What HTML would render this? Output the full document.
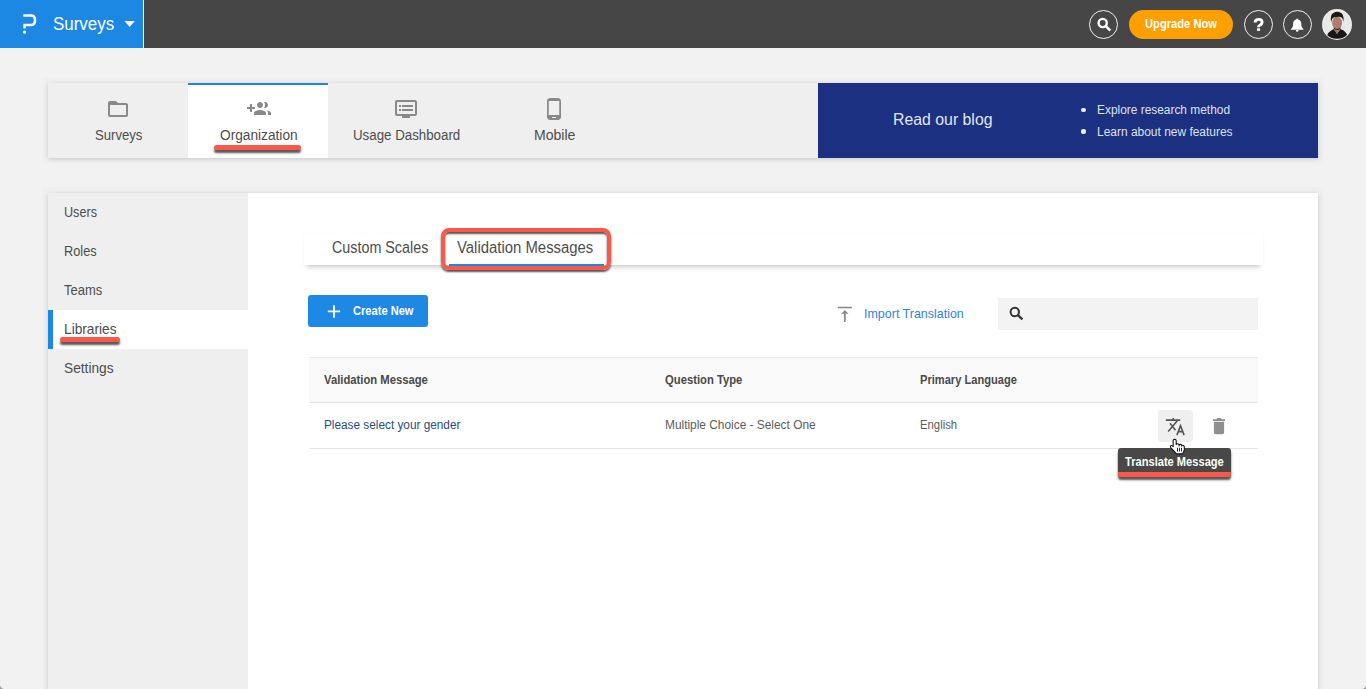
<!DOCTYPE html>
<html><head><meta charset="utf-8"><style>
html,body{margin:0;padding:0;}
body{width:1366px;height:689px;overflow:hidden;background:#f2f2f2;position:relative;font-family:"Liberation Sans",sans-serif;}
.abs{position:absolute;box-sizing:content-box;}
.t{position:absolute;line-height:1;white-space:nowrap;}
svg.abs{overflow:visible;}
</style></head><body>
<div class="abs" style="left:0px;top:0px;width:1366px;height:48px;background:#464646"></div>
<div class="abs" style="left:0px;top:0px;width:143px;height:48px;background:#1d87e4"></div>
<div class="abs" style="left:143px;top:0px;width:1px;height:48px;background:#f4f4f4"></div>
<svg class="abs" style="left:18px;top:10px" width="22" height="26" viewBox="18 10 22 26"><path d="M24.6 28.6 V25 H31 Q35 25 35 20.2 Q35 15.5 31 15.5 H23.3" fill="none" stroke="#fff" stroke-width="2.5"/><circle cx="24.6" cy="32.1" r="1.6" fill="#fff"/></svg>
<div class="t" style="left:53.00px;top:15.36px;font-size:18px;color:#fff;transform:scaleX(0.9412);transform-origin:0 0;">Surveys</div>
<svg class="abs" style="left:124px;top:21px" width="11" height="6" viewBox="124 21 11 6"><path d="M124.5 21 H134.8 L129.65 26.9Z" fill="#fff"/></svg>
<div class="abs" style="left:1088.85px;top:9.65px;width:27.30px;height:27.30px;border:1px solid #f0f0f0;border-radius:50%"></div>
<svg class="abs" style="left:1092px;top:12px" width="24" height="24" viewBox="1092 12 24 24"><circle cx="1102.7" cy="23" r="4.1" fill="none" stroke="#fff" stroke-width="2.4"/><path d="M1105.6 25.9 L1110.3 30.6" stroke="#fff" stroke-width="2.6"/></svg>
<div class="abs" style="left:1129px;top:10px;width:104px;height:29px;border-radius:15px;background:#ff9f00"></div>
<div class="t" style="left:1145.00px;top:17.10px;font-size:13px;color:#fff;transform:scaleX(0.8590);transform-origin:0 0;font-weight:700;">Upgrade Now</div>
<div class="abs" style="left:1243.85px;top:9.75px;width:27.30px;height:27.30px;border:1px solid #f0f0f0;border-radius:50%"></div>
<svg class="abs" style="left:1250px;top:14px" width="18" height="20" viewBox="1250 14 18 20"><path d="M1255.1 22.6 Q1255.1 19.4 1258.6 19.4 Q1262.1 19.4 1262.1 22.3 Q1262.1 24.1 1260.1 25 Q1258.5 25.7 1258.5 27.3" fill="none" stroke="#fff" stroke-width="2.9"/><rect x="1256.95" y="28.3" width="3.1" height="2.6" fill="#fff"/></svg>
<div class="abs" style="left:1282.85px;top:9.75px;width:27.30px;height:27.30px;border:1px solid #f0f0f0;border-radius:50%"></div>
<svg class="abs" style="left:1288px;top:16px" width="18" height="18" viewBox="1288 16 18 18"><path d="M1297.2 18.6 Q1298 18.6 1298.1 19.5 Q1301.3 20.3 1301.3 24 L1301.5 26.2 Q1302 27.8 1303.4 28.9 V29.7 H1291 V28.9 Q1292.4 27.8 1292.9 26.2 L1293.1 24 Q1293.1 20.3 1296.3 19.5 Q1296.4 18.6 1297.2 18.6Z" fill="#fff"/><path d="M1295.8 30.1 H1298.6 Q1298.5 31.9 1297.2 31.9 Q1295.9 31.9 1295.8 30.1Z" fill="#fff"/></svg>
<div class="abs" style="left:1322.5px;top:10.4px;width:28.2px;height:28.2px;border-radius:50%;overflow:hidden;background:#e8e8e8;box-shadow:0 0 0 0.9px #f2f2f2">
<svg width="28.2" height="28.2" viewBox="0.5 0.5 28.2 28.2" style="display:block"><path d="M3.6 29.3 Q5 21.8 11.6 19.6 L14.4 24 L17.6 19.6 Q24.5 21.5 26.2 29.3Z" fill="#171717"/><path d="M11.9 17 H17.4 L17.2 21 L14.5 24.5 L12.1 21Z" fill="#a0766a"/><ellipse cx="14.6" cy="13.4" rx="5" ry="6.1" fill="#a97f6e"/><path d="M11 17.8 Q14.6 21.2 18.2 17.8 L17.8 19.6 Q14.6 21.6 11.4 19.6Z" fill="#3b2b25"/><path d="M8.6 13 Q7.4 5 11 3.6 Q13.5 1.8 16.5 2.6 Q21.8 3.4 21 12.2 Q20.2 9.4 19.5 8.2 Q16.8 6.8 14.2 7.6 Q10.5 7.4 9.6 9.5 Q8.9 11 8.6 13Z" fill="#1b1816"/></svg></div>
<div class="abs" style="left:48px;top:83px;width:1270px;height:75px;background:#efefef;box-shadow:0 0 1.5px 6px rgba(0,0,0,0.013), 0 1px 4px rgba(0,0,0,0.17)"></div>
<div class="abs" style="left:188px;top:83px;width:140px;height:75px;background:#fff"></div>
<div class="abs" style="left:188px;top:83px;width:140px;height:2px;background:#1d87e4"></div>
<div class="abs" style="left:818px;top:83px;width:500px;height:75px;background:#1b3080"></div>
<svg class="abs" style="left:106.0px;top:97px" width="24" height="24" viewBox="0 0 24 24"><path d="M20 6h-8l-2-2H4c-1.1 0-1.99.9-1.99 2L2 18c0 1.1.9 2 2 2h16c1.1 0 2-.9 2-2V8c0-1.1-.9-2-2-2zm0 12H4V8h16v10z" fill="#898989"/></svg>
<div class="t" style="left:94.80px;top:128.15px;font-size:14px;color:#4d4d4d;transform:scaleX(0.9372);transform-origin:0 0;">Surveys</div>
<svg class="abs" style="left:246.8px;top:97px" width="24" height="24" viewBox="0 0 24 24"><path d="M8 10H5V7H3v3H0v2h3v3h2v-3h3v-2zm10 1c1.66 0 2.99-1.34 2.99-3S19.66 5 18 5c-.32 0-.63.05-.91.14.57.81.9 1.79.9 2.86s-.34 2.04-.9 2.86c.28.09.59.14.91.14zm-5 0c1.66 0 2.99-1.34 2.99-3S14.66 5 13 5c-1.66 0-3 1.34-3 3s1.34 3 3 3zm6.62 2.16c.83.73 1.38 1.66 1.38 2.84v2h3v-2c0-1.54-2.37-2.49-4.38-2.84zM13 13c-2 0-6 1-6 3v2h12v-2c0-2-4-3-6-3z" fill="#898989"/></svg>
<div class="t" style="left:219.80px;top:128.15px;font-size:14px;color:#4d4d4d;transform:scaleX(0.9776);transform-origin:0 0;">Organization</div>
<svg class="abs" style="left:394.1px;top:97px" width="24" height="24" viewBox="0 0 24 24"><path d="M21 3H3c-1.1 0-2 .9-2 2v12c0 1.1.9 2 2 2h5v2h8v-2h5c1.1 0 1.99-.9 1.99-2L23 5c0-1.1-.9-2-2-2zm0 14H3V5h18v12zm-2-9H8v2h11V8zm0 4H8v2h11v-2zM7 8H5v2h2V8zm0 4H5v2h2v-2z" fill="#898989"/></svg>
<div class="t" style="left:352.80px;top:128.15px;font-size:14px;color:#4d4d4d;transform:scaleX(0.9500);transform-origin:0 0;">Usage Dashboard</div>
<svg class="abs" style="left:542.1px;top:97px" width="24" height="24" viewBox="0 0 24 24"><path d="M16 1H8C6.34 1 5 2.34 5 4v16c0 1.66 1.34 3 3 3h8c1.66 0 3-1.34 3-3V4c0-1.66-1.34-3-3-3zm-2 20h-4v-1h4v1zm3.25-3H6.75V4h10.5v14z" fill="#898989"/></svg>
<div class="t" style="left:533.90px;top:128.15px;font-size:14px;color:#4d4d4d;transform:scaleX(1.0041);transform-origin:0 0;">Mobile</div>
<div class="abs" style="left:214.2px;top:145px;width:86.60000000000002px;height:5px;background:#fc5749;border-radius:2.5px;box-shadow:0 3px 2.2px rgba(55,55,55,0.85)"></div>
<div class="t" style="left:892.70px;top:111.03px;font-size:16.5px;color:#e2e5f0;transform:scaleX(0.9599);transform-origin:0 0;">Read our blog</div>
<div class="abs" style="left:1081.4px;top:108.2px;width:4.2px;height:4.2px;border-radius:50%;background:#eceef5"></div>
<div class="abs" style="left:1081.4px;top:129.4px;width:4.2px;height:4.2px;border-radius:50%;background:#eceef5"></div>
<div class="t" style="left:1096.60px;top:104.14px;font-size:12px;color:#dfe2ee;transform:scaleX(0.9920);transform-origin:0 0;">Explore research method</div>
<div class="t" style="left:1096.60px;top:126.34px;font-size:12px;color:#dfe2ee;transform:scaleX(0.9963);transform-origin:0 0;">Learn about new features</div>
<div class="abs" style="left:48px;top:193px;width:1270px;height:520px;background:#fff;box-shadow:0 0 1.5px 6px rgba(0,0,0,0.013), 0 1px 4px rgba(0,0,0,0.17)"></div>
<div class="abs" style="left:48px;top:193px;width:200px;height:520px;background:#efefef"></div>
<div class="abs" style="left:48px;top:310px;width:200px;height:39px;background:#fff"></div>
<div class="abs" style="left:48px;top:310px;width:5px;height:39px;background:#1d87e4"></div>
<div class="t" style="left:64.40px;top:204.83px;font-size:14.5px;color:#4d4d4d;transform:scaleX(0.8711);transform-origin:0 0;">Users</div>
<div class="t" style="left:64.40px;top:243.63px;font-size:14.5px;color:#4d4d4d;transform:scaleX(0.8818);transform-origin:0 0;">Roles</div>
<div class="t" style="left:64.40px;top:282.83px;font-size:14.5px;color:#4d4d4d;transform:scaleX(0.8946);transform-origin:0 0;">Teams</div>
<div class="t" style="left:64.30px;top:321.73px;font-size:14.5px;color:#4d4d4d;transform:scaleX(0.9459);transform-origin:0 0;">Libraries</div>
<div class="t" style="left:63.80px;top:360.53px;font-size:14.5px;color:#4d4d4d;transform:scaleX(0.9469);transform-origin:0 0;">Settings</div>
<div class="abs" style="left:60.2px;top:337px;width:59.599999999999994px;height:5px;background:#fc5749;border-radius:2.5px;box-shadow:0 3px 2.2px rgba(55,55,55,0.85)"></div>
<div class="abs" style="left:303.5px;top:233.3px;width:959px;height:31.7px;background:#fff;box-shadow:0 0 1.5px rgba(0,0,0,0.04), 0 5px 5px -3px rgba(0,0,0,0.22)"></div>
<div class="t" style="left:332.20px;top:239.56px;font-size:16px;color:#4d4d4d;transform:scaleX(0.8950);transform-origin:0 0;">Custom Scales</div>
<div class="abs" style="left:449px;top:264px;width:155px;height:2px;background:#1d87e4"></div>
<div class="t" style="left:457.30px;top:239.56px;font-size:16px;color:#4d4d4d;transform:scaleX(0.9308);transform-origin:0 0;">Validation Messages</div>
<div class="abs" style="left:441px;top:228px;width:161.5px;height:33.7px;border:4px solid #fc5749;border-radius:8px;box-shadow:0 2px 2px rgba(55,55,55,0.85), inset 0 2px 2px rgba(55,55,55,0.85)"></div>
<div class="abs" style="left:308px;top:295px;width:120px;height:32px;background:#1e88e5;border-radius:3px"></div>
<svg class="abs" style="left:326px;top:304px" width="16" height="16" viewBox="326 304 16 16"><path d="M334 305.2 V317.7 M327.8 311.45 H340.2" stroke="#fff" stroke-width="1.8"/></svg>
<div class="t" style="left:352.80px;top:304.64px;font-size:12px;color:#fff;transform:scaleX(0.9251);transform-origin:0 0;font-weight:700;">Create New</div>
<svg class="abs" style="left:830px;top:298px" width="30" height="30" viewBox="830 298 30 30"><rect x="837.8" y="306.7" width="14" height="1.6" fill="#8a8a8a"/><path d="M841.2 313.8 L844.85 310.1 L848.5 313.8Z" fill="#8a8a8a"/><rect x="843.95" y="313" width="1.8" height="8.9" fill="#8a8a8a"/></svg>
<div class="t" style="left:864.00px;top:307.20px;font-size:13px;color:#2f86d6;transform:scaleX(0.9593);transform-origin:0 0;">Import Translation</div>
<div class="abs" style="left:998px;top:298px;width:260px;height:32px;background:#f3f3f3"></div>
<svg class="abs" style="left:1004px;top:302px" width="24" height="24" viewBox="1004 302 24 24"><circle cx="1014.8" cy="312" r="4.2" fill="none" stroke="#333" stroke-width="2"/><path d="M1017.8 315 L1022.4 319.4" stroke="#333" stroke-width="2.4"/></svg>
<div class="abs" style="left:309px;top:357px;width:949px;height:44px;background:#f9f9f9;border-top:1px solid #e8e8e8;border-bottom:1px solid #e6e6e6"></div>
<div class="abs" style="left:309px;top:448px;width:949px;height:1px;background:#e6e6e6"></div>
<div class="t" style="left:323.90px;top:373.92px;font-size:12.5px;color:#4a4a4a;transform:scaleX(0.9002);transform-origin:0 0;font-weight:700;">Validation Message</div>
<div class="t" style="left:664.80px;top:373.92px;font-size:12.5px;color:#4a4a4a;transform:scaleX(0.9010);transform-origin:0 0;font-weight:700;">Question Type</div>
<div class="t" style="left:920.10px;top:373.92px;font-size:12.5px;color:#4a4a4a;transform:scaleX(0.8885);transform-origin:0 0;font-weight:700;">Primary Language</div>
<div class="t" style="left:324.20px;top:419.04px;font-size:12px;color:#2a4d80;transform:scaleX(0.9831);transform-origin:0 0;">Please select your gender</div>
<div class="t" style="left:664.80px;top:419.04px;font-size:12px;color:#5c5c5c;transform:scaleX(0.9903);transform-origin:0 0;">Multiple Choice - Select One</div>
<div class="t" style="left:920.10px;top:418.84px;font-size:12px;color:#5c5c5c;transform:scaleX(0.9426);transform-origin:0 0;">English</div>
<div class="abs" style="left:1158.2px;top:410px;width:34.6px;height:32px;background:#efefef;border-radius:4px"></div>
<svg class="abs" style="left:1160px;top:414px" width="30" height="24" viewBox="1160 414 30 24"><path d="M1165.8 420.1 H1180.2 M1173.2 417.9 V420.1" stroke="#555" stroke-width="1.6"/><path d="M1177.3 420.8 L1168.2 431.6 M1170 423.2 L1175.5 430.2" stroke="#555" stroke-width="1.6"/><path d="M1176.9 435.1 L1180.5 425.8 L1184.1 435.1 M1178.2 431.6 H1182.8" stroke="#555" stroke-width="1.6" fill="none"/></svg>
<svg class="abs" style="left:1210px;top:415px" width="18" height="22" viewBox="1210 415 18 22"><path d="M1213 420.1 H1225" stroke="#8f8f8f" stroke-width="1.8"/><rect x="1216.6" y="417.9" width="4.8" height="2.4" rx="1" fill="#8f8f8f"/><path d="M1213.9 421.8 H1224.1 V432.3 Q1224.1 434.2 1222.2 434.2 H1215.8 Q1213.9 434.2 1213.9 432.3Z" fill="#8f8f8f"/></svg>
<div class="abs" style="left:1118.1px;top:448.1px;width:112.9px;height:28.8px;background:#484848;border-radius:3px;overflow:hidden;box-shadow:0 3px 2.2px rgba(55,55,55,0.85)"><div style="position:absolute;left:0;bottom:0;width:113px;height:4.8px;background:#fc5749"></div></div>
<div class="t" style="left:1125.20px;top:455.74px;font-size:12px;color:#fff;transform:scaleX(0.9256);transform-origin:0 0;font-weight:700;">Translate Message</div>
<svg class="abs" style="left:1165px;top:435px" width="25" height="25" viewBox="1165 435 25 25"><path d="M1174.6 439.2 Q1176.2 439.3 1176.2 440.8 L1176.2 444.4 Q1177.7 443.2 1178.9 444.4 L1179.1 444.9 Q1180.4 443.9 1181.5 445 L1181.7 445.4 Q1183.4 444.8 1184.2 446.3 L1184.4 449.5 Q1184.1 451.8 1182.2 453.9 L1176.3 453.9 Q1175.3 452.3 1174.3 451.3 L1171.1 448.1 Q1170 446.9 1170.6 445.9 Q1171.3 445.1 1172.4 445.9 L1173.2 446.6 L1173.1 440.7 Q1173.2 439.2 1174.6 439.2Z" fill="#fff" stroke="#111" stroke-width="1.1" stroke-linejoin="round"/><path d="M1177.5 447.8 V451.5 M1179.5 447.8 V451.5 M1181.5 447.8 V451.5 M1179 445 V446.4 M1181.6 445.4 V446.6" stroke="#111" stroke-width="0.9"/></svg>
<div class="abs" style="left:0;top:684px;width:5px;height:5px;background:radial-gradient(circle at 100% 0, rgba(0,0,0,0) 4.6px, #9c9c9c 5.8px)"></div>
<div class="abs" style="left:1361px;top:684px;width:5px;height:5px;background:radial-gradient(circle at 0 0, rgba(0,0,0,0) 4.6px, #9c9c9c 5.8px)"></div>
</body></html>
